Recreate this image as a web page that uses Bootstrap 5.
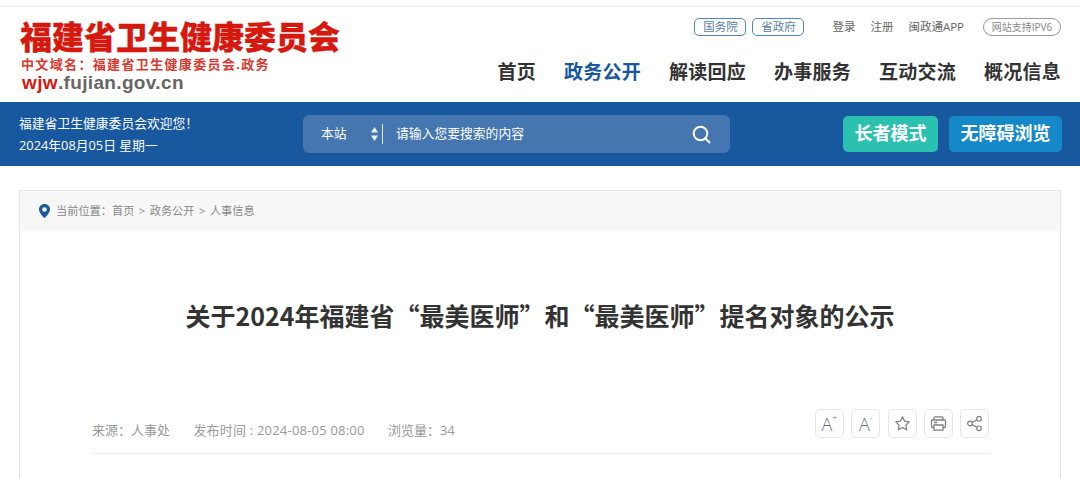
<!DOCTYPE html>
<html lang="zh-CN">
<head>
    <meta charset="UTF-8">
    <meta name="viewport" content="width=device-width, initial-scale=1.0">
    <title>关于2024年福建省“最美医师”和“最美医师”提名对象的公示</title>
    <link href="https://cdn.jsdelivr.net/npm/bootstrap@5.3.0/dist/css/bootstrap.min.css" rel="stylesheet">
    <style>
        body {
            font-family: "Open Sans", "Noto Sans CJK SC", sans-serif;
            background-color: #fff;
            height: 478px;
            overflow: hidden;
        }
        .top-strip { height: 7px; border-bottom: 2px solid #f3f3f3; }
        .site-head { height: 95px; padding: 0 19px 0 20px; }
        .logo-title { font-size: 32px; line-height: 36px; font-weight: 900; color: #d5190f; margin-top: 13px; -webkit-text-stroke: .3px #d5190f; font-family: "Liberation Sans", "Noto Sans CJK SC", sans-serif; }
        .logo-cn { font-size: 13px; line-height: 16px; font-weight: 700; color: #d9382e; letter-spacing: 1.35px; padding-left: 1px; margin-top: 1px; font-family: "Liberation Sans", "Noto Sans CJK SC", sans-serif; }
        .logo-url { font-size: 19px; line-height: 20px; font-weight: 700; color: #666; padding-left: 2px; letter-spacing: .35px; font-family: "Liberation Sans", sans-serif; }
        .logo-url b { color: #d5190f; }
        .top-links { height: 18px; margin-top: 11px; font-size: 11.5px; color: #666; }
        .tag-link { width: 52px; height: 18px; line-height: 16px; border: 1px solid #4d86c0; border-radius: 5px; color: #5a7fa8; text-align: center; margin-right: 6px; }
        .user-link { margin-left: 15px; }
        .user-first { margin-left: 22px; }
        .ipv6-tag { width: 78px; height: 18px; line-height: 16px; border: 1px solid #999; border-radius: 9px; color: #888; text-align: center; font-size: 10px; margin-left: 19px; }
        .main-nav { margin-top: 21px; font-size: 19px; line-height: 28px; font-weight: 700; color: #333; gap: 28px; letter-spacing: .25px; font-family: "Noto Sans CJK SC", sans-serif; }
        .main-nav .is-on { color: #17589f; }
        .blue-band { height: 64px; background-color: #17589f; padding: 0 18px 0 19px; color: #fff; }
        .hello-text { width: 284px; font-size: 12.8px; line-height: 22px; }
        .search-box { width: 427px; height: 38px; background-color: #4576b0; border-radius: 6px; font-size: 12.8px; padding: 0 19px 0 18px; }
        .search-site { width: 49px; }
        .search-arrows { width: 9px; margin-right: 3px; }
        .search-split { width: 1px; height: 20px; background-color: #dfe8f2; margin-right: 13px; }
        .mode-btn { height: 36px; line-height: 33px; border-radius: 5px; font-size: 18px; font-weight: 700; color: #fff; text-align: center; font-family: "Noto Sans CJK SC", sans-serif; }
        .mode-old { width: 95px; background-color: #2cc0b1; margin-right: 11px; }
        .mode-free { width: 113px; background-color: #1589c8; }
        .article-box { margin: 24px 19px 0; border: 1px solid #e6e6e6; border-bottom: 0; height: 300px; }
        .crumb-bar { height: 40px; background-color: #f7f7f7; padding-left: 19px; font-size: 11.2px; color: #888; }
        .crumb-bar svg { margin-right: 6px; }
        .crumb-sep { margin: 0 4.5px; }
        .article-title { font-size: 25px; line-height: 34px; font-weight: 700; color: #333; text-align: center; margin: 67px 0 0; font-family: "Noto Sans CJK SC", sans-serif; }
        .meta-row { margin: 77px 71px 0 72px; height: 45px; border-bottom: 1px solid #eee; font-size: 13px; color: #999; }
        .meta-text { margin-top: 12px; }
        .meta-text span { margin-right: 20px; }
        .meta-text .meta-date { letter-spacing: .2px; }
        .tool-btn { width: 29px; height: 29px; border: 1px solid #e6e6e6; border-radius: 5px; margin-left: 7.25px; color: #6f6f6f; font-size: 18px; line-height: 1; font-weight: 300; }
        .tool-btn sup { font-size: 9px; top: -6px; left: 0; }
    </style>
</head>
<body>
<div class="top-strip"></div>

<header class="site-head d-flex justify-content-between">
    <div>
        <div class="logo-title">福建省卫生健康委员会</div>
        <div class="logo-cn">中文域名：福建省卫生健康委员会.政务</div>
        <div class="logo-url"><b>wjw</b>.fujian.gov.cn</div>
    </div>
    <div class="d-flex flex-column align-items-end">
        <div class="top-links d-flex align-items-center">
            <a class="tag-link text-decoration-none">国务院</a>
            <a class="tag-link text-decoration-none">省政府</a>
            <span class="user-first">登录</span>
            <span class="user-link">注册</span>
            <span class="user-link">闽政通APP</span>
            <a class="ipv6-tag text-decoration-none">网站支持IPV6</a>
        </div>
        <nav class="main-nav d-flex">
            <span>首页</span>
            <span class="is-on">政务公开</span>
            <span>解读回应</span>
            <span>办事服务</span>
            <span>互动交流</span>
            <span>概况信息</span>
        </nav>
    </div>
</header>

<section class="blue-band d-flex align-items-center">
    <div class="hello-text">
        <div>福建省卫生健康委员会欢迎您！</div>
        <div>2024年08月05日 星期一</div>
    </div>
    <div class="search-box d-flex align-items-center">
        <span class="search-site">本站</span>
        <svg class="search-arrows" width="9" height="16" viewBox="0 0 9 16"><path d="M4.500 1 8 6.500H1zM4.500 15 1 9.500h7z" fill="#e8eef6"/></svg>
        <span class="search-split"></span>
        <span class="flex-grow-1">请输入您要搜索的内容</span>
        <svg width="19" height="19" viewBox="0 0 19 19" fill="none" stroke="#fff" stroke-width="2"><circle cx="8.500" cy="8.500" r="6.800"/><path d="m13.500 13.500 4 4" stroke-linecap="round"/></svg>
    </div>
    <div class="ms-auto d-flex">
        <span class="mode-btn mode-old">长者模式</span>
        <span class="mode-btn mode-free">无障碍浏览</span>
    </div>
</section>

<main class="article-box">
    <div class="crumb-bar d-flex align-items-center">
        <svg width="11" height="14" viewBox="0 0 11 14"><path fill="#17589f" fill-rule="evenodd" d="M5.500 0C2.500 0 0 2.400 0 5.400 0 9 5.500 14 5.500 14S11 9 11 5.400C11 2.400 8.500 0 5.500 0zm0 3.200a2.300 2.300 0 1 1 0 4.600 2.300 2.300 0 0 1 0-4.600z"/></svg>
        <span>当前位置：首页<span class="crumb-sep">&gt;</span>政务公开<span class="crumb-sep">&gt;</span>人事信息</span>
    </div>
    <h1 class="article-title">关于2024年福建省“最美医师”和“最美医师”提名对象的公示</h1>
    <div class="meta-row d-flex justify-content-between align-items-start">
        <div class="meta-text">
            <span>来源：人事处</span>
            <span class="meta-date">发布时间 : 2024-08-05 08:00</span>
            <span>浏览量：34</span>
        </div>
        <div class="d-flex">
            <div class="tool-btn d-flex align-items-center justify-content-center">A<sup>+</sup></div>
            <div class="tool-btn d-flex align-items-center justify-content-center">A<sup>-</sup></div>
            <div class="tool-btn d-flex align-items-center justify-content-center">
                <svg width="17" height="17" viewBox="0 0 17 17" fill="none" stroke="#808080" stroke-width="1.200" stroke-linejoin="round"><path d="m8.500 1.800 2.100 4.300 4.700.7-3.400 3.300.8 4.700-4.200-2.200-4.200 2.200.8-4.700-3.400-3.300 4.700-.7z"/></svg>
            </div>
            <div class="tool-btn d-flex align-items-center justify-content-center">
                <svg width="17" height="17" viewBox="0 0 17 17" fill="none" stroke="#808080" stroke-width="1.300" stroke-linejoin="round"><path d="M4 5V2.800q0-1 1-1h7q1 0 1 1V5M4 12.500H2.500q-1 0-1-1V6q0-1 1-1h12q1 0 1 1v5.500q0 1-1 1H13"/><path d="M4 10h9v5.200H4zM4 7.500h3"/></svg>
            </div>
            <div class="tool-btn d-flex align-items-center justify-content-center">
                <svg width="17" height="17" viewBox="0 0 17 17" fill="none" stroke="#808080" stroke-width="1.200"><circle cx="4" cy="8.500" r="2.300"/><circle cx="13" cy="3.700" r="2.300"/><circle cx="13" cy="13.300" r="2.300"/><path d="m6 7.400 5-2.700M6 9.600l5 2.700"/></svg>
            </div>
        </div>
    </div>
</main>

<script src="https://cdn.jsdelivr.net/npm/bootstrap@5.3.0/dist/js/bootstrap.bundle.min.js"></script>
</body>
</html>
